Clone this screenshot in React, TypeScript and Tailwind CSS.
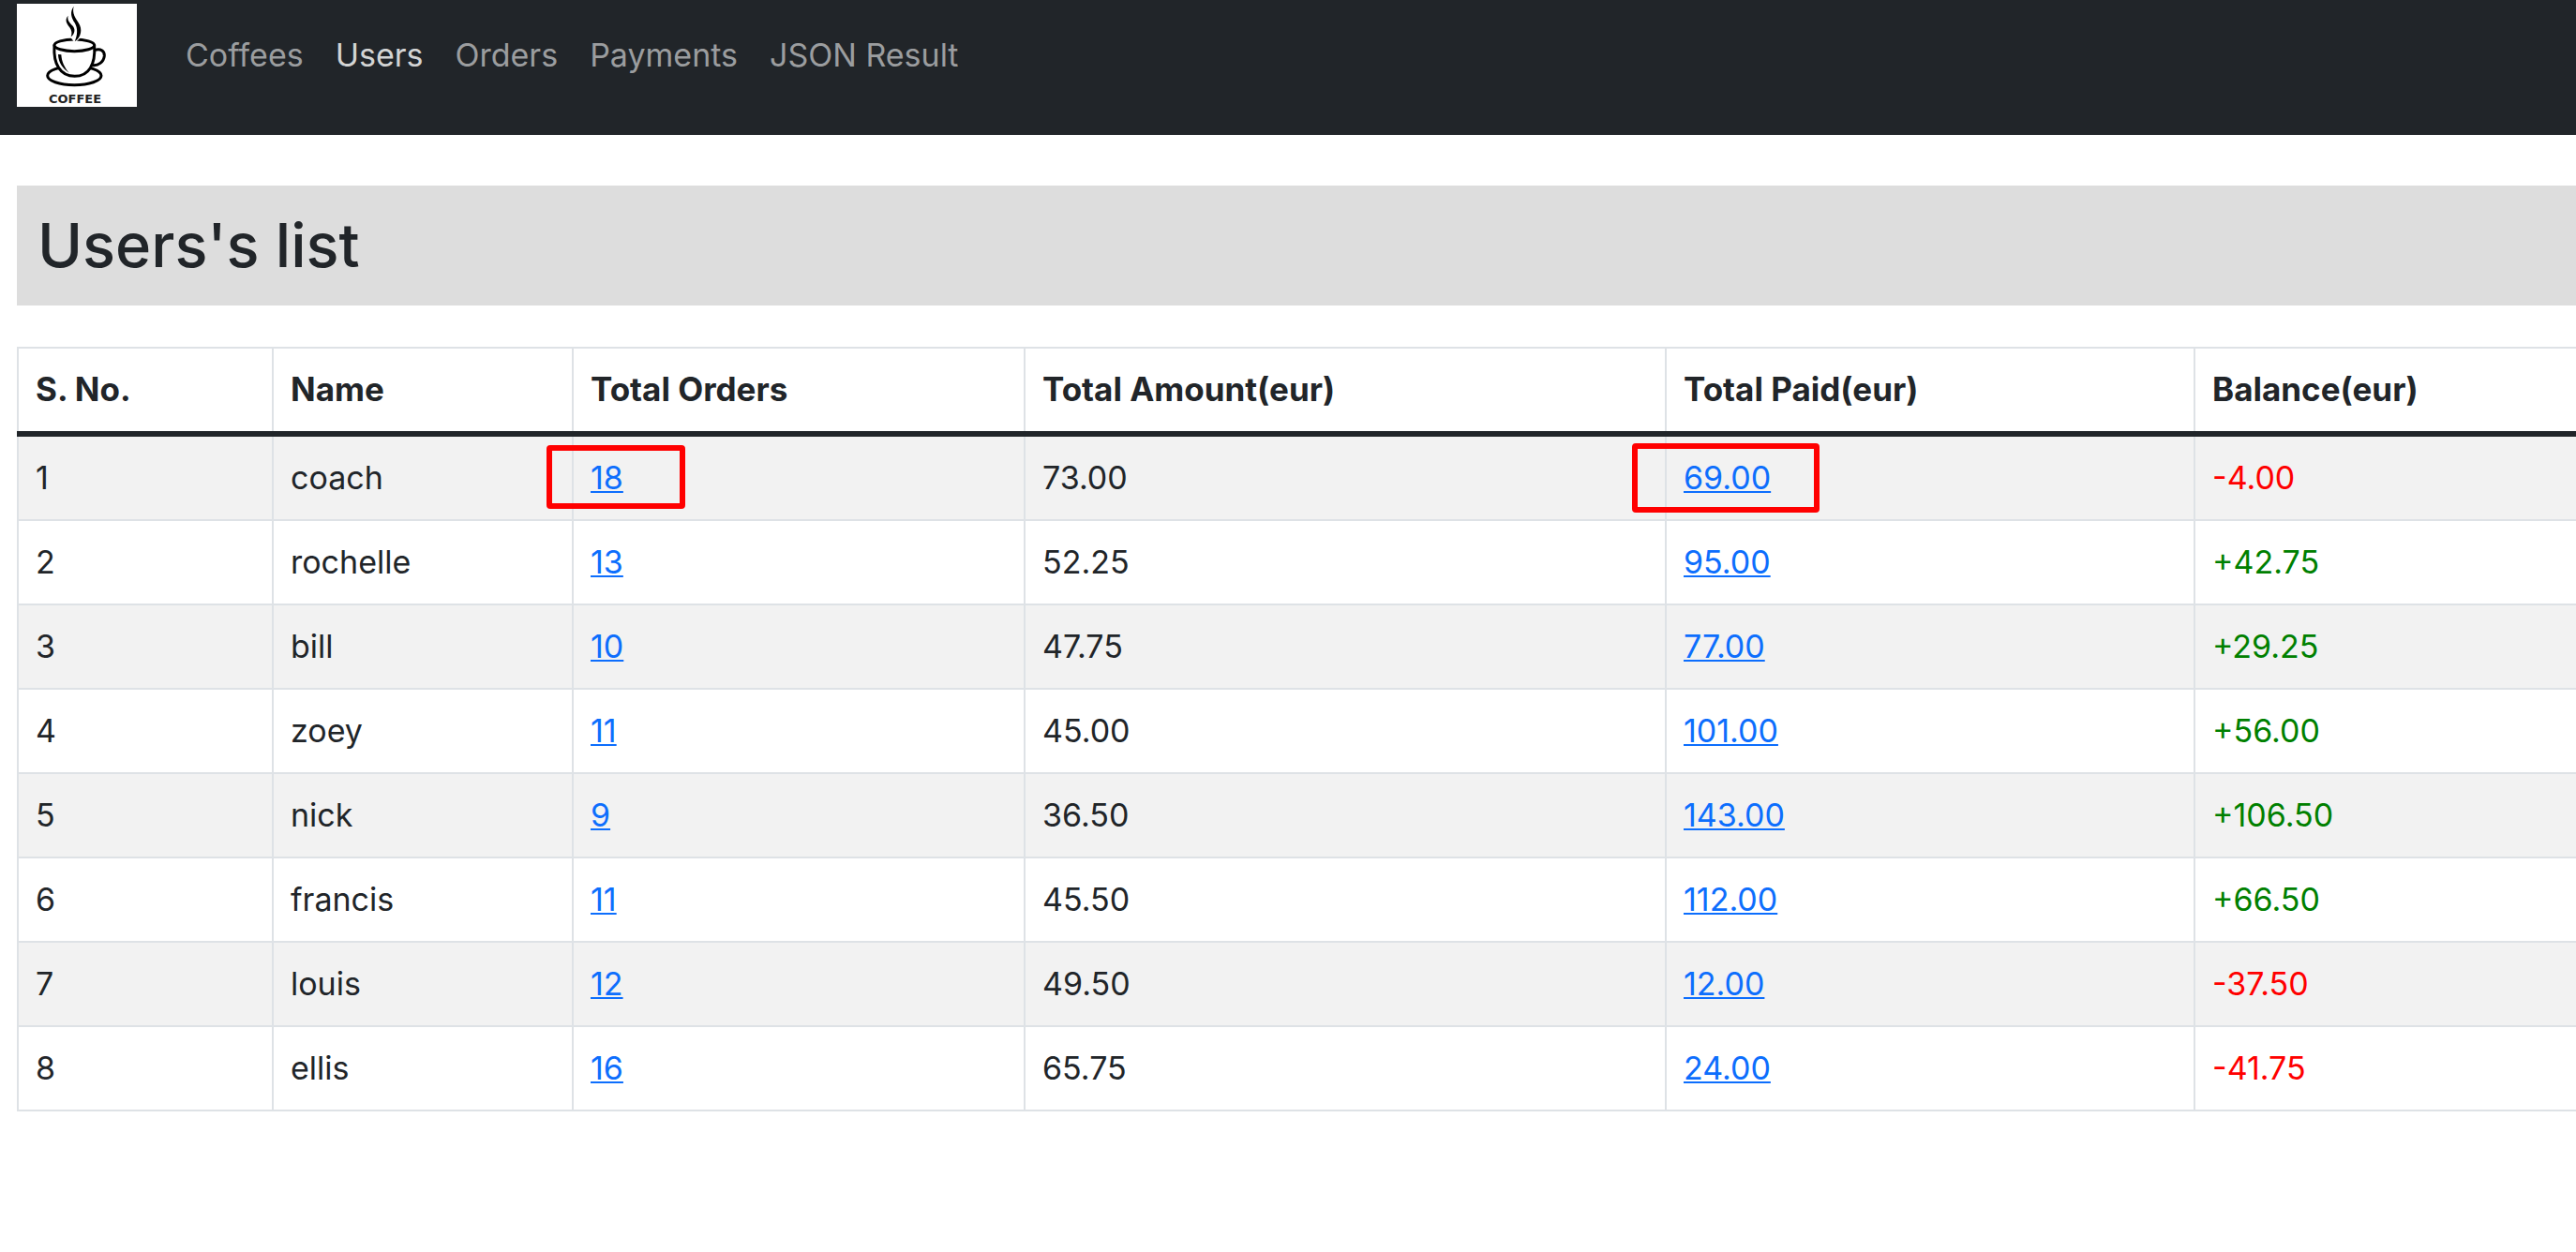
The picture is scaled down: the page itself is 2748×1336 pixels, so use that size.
type User = {
  name: string;
  orders: string;
  amount: string;
  paid: string;
  balance: string;
};

const navItems = ['Coffees', 'Users', 'Orders', 'Payments', 'JSON Result'];

const users: User[] = [
  { name: 'coach', orders: '18', amount: '73.00', paid: '69.00', balance: '-4.00' },
  { name: 'rochelle', orders: '13', amount: '52.25', paid: '95.00', balance: '+42.75' },
  { name: 'bill', orders: '10', amount: '47.75', paid: '77.00', balance: '+29.25' },
  { name: 'zoey', orders: '11', amount: '45.00', paid: '101.00', balance: '+56.00' },
  { name: 'nick', orders: '9', amount: '36.50', paid: '143.00', balance: '+106.50' },
  { name: 'francis', orders: '11', amount: '45.50', paid: '112.00', balance: '+66.50' },
  { name: 'louis', orders: '12', amount: '49.50', paid: '12.00', balance: '-37.50' },
  { name: 'ellis', orders: '16', amount: '65.75', paid: '24.00', balance: '-41.75' },
];

const columns = [
  { label: 'S. No.', width: 'w-[272px]' },
  { label: 'Name', width: 'w-[320px]' },
  { label: 'Total Orders', width: 'w-[482px]' },
  { label: 'Total Amount(eur)', width: 'w-[684px]' },
  { label: 'Total Paid(eur)', width: 'w-[564px]' },
  { label: 'Balance(eur)', width: '' },
];

const cell = 'relative border-2 border-[#dee2e6] px-[18px] py-[17px] last:border-r-0';
const link = 'text-[#0d6efd] underline decoration-2 underline-offset-2 [text-decoration-skip-ink:none]';

function Logo() {
  return (
    <a href="#home" aria-label="Coffee home" className="flex h-[110px] w-32 flex-col items-center bg-white">
      <svg viewBox="54 12 384 282" className="h-[94px] w-32" fill="none" stroke="#000" aria-hidden="true">
        <ellipse cx="238" cy="242" rx="86" ry="30" strokeWidth="9" />
        <path
          d="M174 147C170 205 193 244 239 244C285 244 306 205 302 147Z"
          fill="#fff"
          strokeWidth="9"
        />
        <ellipse cx="238" cy="145" rx="64" ry="19" fill="#fff" strokeWidth="9" />
        <path d="M304 160C321 154 335 163 334 179C332 199 314 211 296 209" strokeWidth="9" />
        <path d="M186 174L196 175C197 196 206 216 221 233C201 219 187 201 186 174Z" fill="#000" stroke="none" />
        <path d="M226 120H258L240 137Z" fill="#fff" stroke="none" />
        <path
          d="M236 20C222 40 229 57 239 73C250 92 248 113 239 133C261 119 264 92 252 74C241 56 230 43 236 20Z"
          fill="#000"
          stroke="none"
        />
        <path
          d="M218 50C205 65 215 77 223 88C230 98 231 108 227 118C241 106 241 93 233 83C223 72 214 65 218 50Z"
          fill="#000"
          stroke="none"
        />
      </svg>
      <span className="pr-1 font-['DejaVu_Sans',sans-serif] text-[13px] leading-4 font-bold text-[#222]">COFFEE</span>
    </a>
  );
}

function Highlight({ className }: { className: string }) {
  return (
    <span
      aria-hidden="true"
      className={`pointer-events-none absolute z-10 rounded-sm border-[6px] border-[#f00] ${className}`}
    />
  );
}

export default function App() {
  return (
    <div className="min-h-screen overflow-x-hidden bg-white font-['Inter',sans-serif] text-[34px] leading-[54px] text-[#212529]">
      <header className="flex h-36 items-start bg-[#212529] px-[18px] pt-1">
        <Logo />
        <nav className="ml-[52px] flex gap-[34px] pt-7">
          {navItems.map((item) => (
            <a
              key={item}
              href={`#${item.toLowerCase().replace(' ', '-')}`}
              className={item === 'Users' ? 'text-[#d3d4d4]' : 'text-[#9b9d9f]'}
            >
              {item}
            </a>
          ))}
        </nav>
      </header>

      <main className="pt-[54px] pl-[18px]">
        <h1 className="bg-[#ddd] px-[22px] py-5 text-[65px] leading-[88px] font-medium">Users's list</h1>

        <table className="mt-11 w-full table-fixed border-collapse text-left">
          <thead className="text-[35px]">
            <tr>
              {columns.map(({ label, width }) => (
                <th
                  key={label}
                  scope="col"
                  className={`border-2 border-b-[6px] border-[#dee2e6] border-b-[#212529] px-[18px] pt-4 pb-[18px] font-bold last:border-r-0 ${width}`}
                >
                  {label}
                </th>
              ))}
            </tr>
          </thead>
          <tbody>
            {users.map((user, i) => (
              <tr key={user.name} className="odd:bg-[#f2f2f2]">
                <td className={cell}>{i + 1}</td>
                <td className={cell}>{user.name}</td>
                <td className={cell}>
                  <a href={`#orders-${user.name}`} className={link}>{user.orders}</a>
                  {i === 0 && <Highlight className="top-[9px] -left-[29px] h-[68px] w-[148px]" />}
                </td>
                <td className={cell}>{user.amount}</td>
                <td className={cell}>
                  <a href={`#payments-${user.name}`} className={link}>{user.paid}</a>
                  {i === 0 && <Highlight className="top-[7px] -left-[37px] h-[74px] w-[200px]" />}
                </td>
                <td className={`${cell} ${user.balance.startsWith('-') ? 'text-[#f00]' : 'text-[#008000]'}`}>
                  {user.balance}
                </td>
              </tr>
            ))}
          </tbody>
        </table>
      </main>
    </div>
  );
}
